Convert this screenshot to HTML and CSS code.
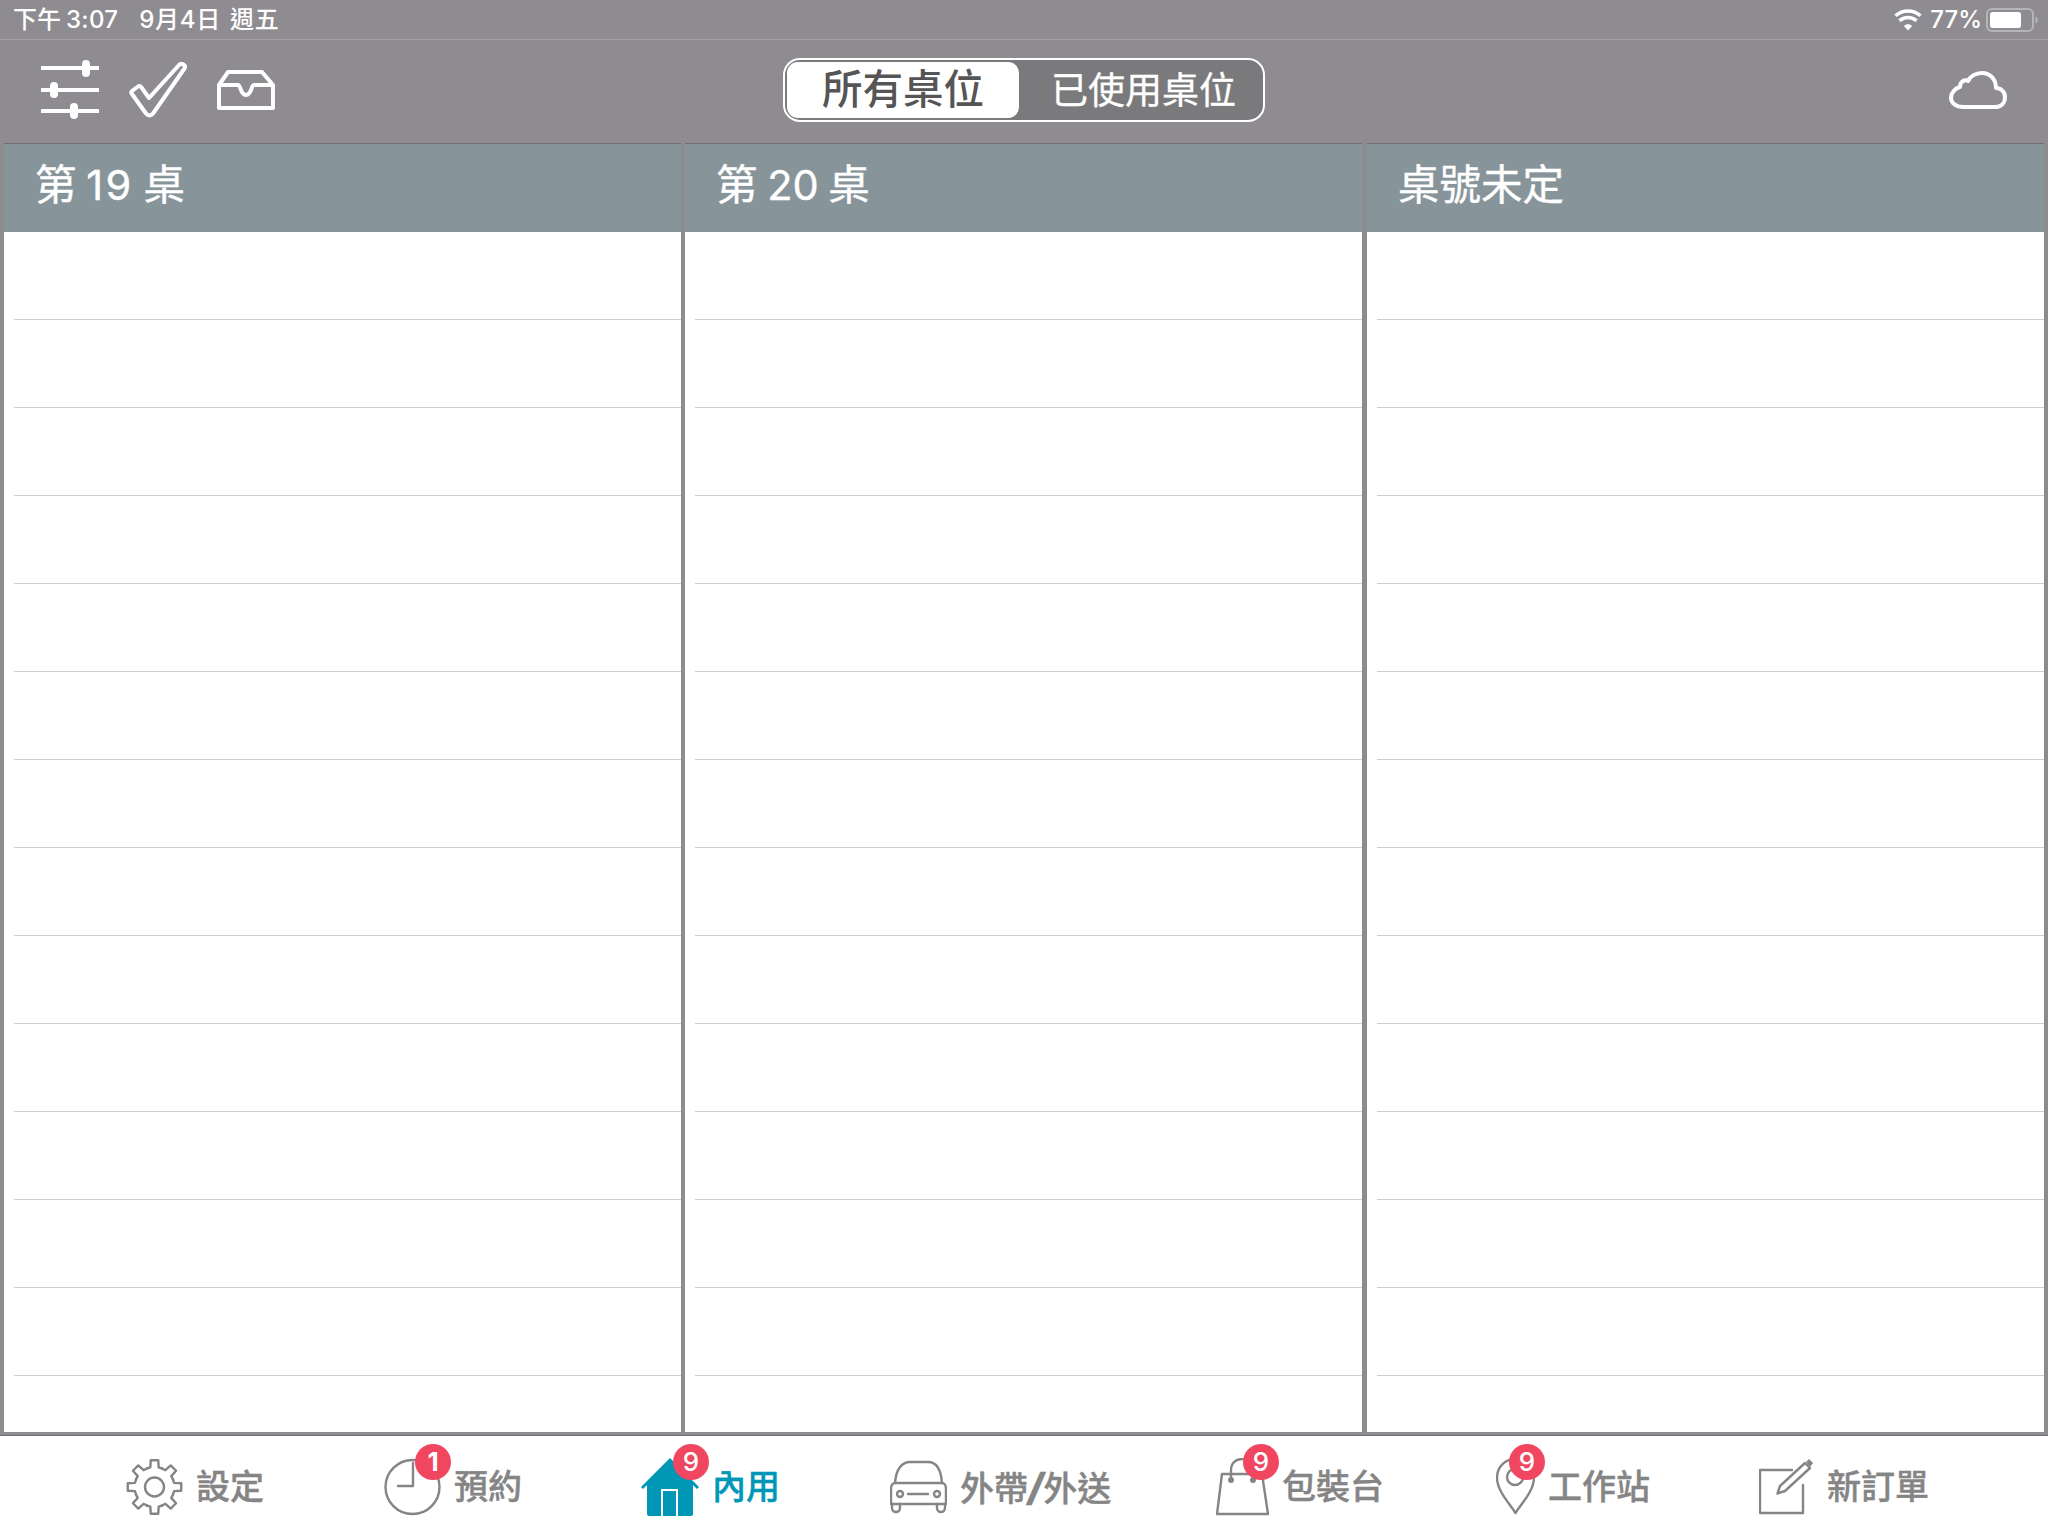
FILE: index.html
```html
<!DOCTYPE html>
<html lang="zh-Hant">
<head>
<meta charset="utf-8">
<title>內用</title>
<link rel="stylesheet" href="styles.css">
</head>
<body>
<div class="app">
  <header class="status">
    <div class="status-left"><span class="clock-text">下午<span class="clock-digits">3:07</span></span><span class="date-text">9月4日 週五</span></div>
    <div class="status-right">
      <svg class="wifi" viewBox="0 0 28 22"><path class="wifi-fill" d="M14 21.500 L9.800 17 C12.200 14.800 15.800 14.800 18.200 17Z"/><path class="wifi-line" d="M5.500 11.800 C10.300 7.500 17.700 7.500 22.500 11.800"/><path class="wifi-line" d="M1.500 6.800 C8.800 .400 19.200 .400 26.500 6.800"/></svg>
      <span>77%</span>
      <svg class="battery" viewBox="0 0 52 24"><rect class="battery-shell" x="1" y="1" width="46" height="22" rx="5"/><rect class="battery-level" x="4" y="4" width="31" height="16" rx="2.500"/><path class="battery-nub" d="M49.500 8.500 C51 9 52 10.500 52 12 C52 13.500 51 15 49.500 15.500Z"/></svg>
    </div>
  </header>

  <div class="toolbar">
    <div class="tools">
      <svg class="tool-sliders" viewBox="0 0 58 60"><path class="line-white" d="M1 8H57M1 30H57M1 51H57"/><rect class="knob" x="41" y="0" width="8" height="17" rx="4"/><rect class="knob" x="9" y="22" width="8" height="16" rx="4"/><rect class="knob" x="29" y="43" width="8" height="16" rx="4"/></svg>
      <svg class="tool-check" viewBox="0 0 58 56"><path class="line-white" d="M3 29 L9 24.500 C10.500 23.500 11.500 24 12.500 25.500 L20 36 L50 3 C52.500 .500 57.500 3 55.500 6.500 L24 51.500 C22 54 19 54 17 51.500 L3 32 C2 31 2 30 3 29Z"/></svg>
      <svg class="tool-inbox" viewBox="0 0 58 40"><path class="line-white" d="M2 15 L11 2 H45 L56 15 V38 H2Z M2 15 H21 C24 15 23 25 29 25 C35 25 34 15 37 15 H56"/></svg>
    </div>
    <div class="segment">
      <span class="seg-on">所有桌位</span>
      <span class="seg-off">已使用桌位</span>
    </div>
    <svg class="tool-cloud" viewBox="0 0 58 38"><path class="line-white" d="M14 36 H46 C52 36 56 32 56 26 C56 21 52 17 47 17 C47 8 41 2 33 2 C26 2 21 6 19 10 C15 8 11 11 11 16 C6 17 2 22 2 27 C2 32 7 36 14 36Z"/></svg>
  </div>

  <main class="board">
    <section class="column">
      <h2 class="column-title"><span>第 <span class="num-wide">19</span> 桌</span></h2>
      <div class="rows">
        <div class="row"></div><div class="row"></div><div class="row"></div><div class="row"></div><div class="row"></div><div class="row"></div><div class="row"></div><div class="row"></div><div class="row"></div><div class="row"></div><div class="row"></div><div class="row"></div><div class="row"></div>
      </div>
    </section>
    <section class="column">
      <h2 class="column-title">第 20 桌</h2>
      <div class="rows">
        <div class="row"></div><div class="row"></div><div class="row"></div><div class="row"></div><div class="row"></div><div class="row"></div><div class="row"></div><div class="row"></div><div class="row"></div><div class="row"></div><div class="row"></div><div class="row"></div><div class="row"></div>
      </div>
    </section>
    <section class="column">
      <h2 class="column-title">桌號未定</h2>
      <div class="rows">
        <div class="row"></div><div class="row"></div><div class="row"></div><div class="row"></div><div class="row"></div><div class="row"></div><div class="row"></div><div class="row"></div><div class="row"></div><div class="row"></div><div class="row"></div><div class="row"></div><div class="row"></div>
      </div>
    </section>
  </main>

  <nav class="tabs">
    <a class="tab">
      <span class="tab-icon">
        <svg class="i-gear" viewBox="-28.500 -29 57 58">
          <defs><path id="tooth" d="M-7.650-18.480 L-4.160-19.560 L-3.760-26.740 H3.760 L4.160-19.560 L7.650-18.480"/></defs>
          <g class="stroke-gray">
            <use href="#tooth"/><use href="#tooth" transform="rotate(45)"/><use href="#tooth" transform="rotate(90)"/><use href="#tooth" transform="rotate(135)"/><use href="#tooth" transform="rotate(180)"/><use href="#tooth" transform="rotate(225)"/><use href="#tooth" transform="rotate(270)"/><use href="#tooth" transform="rotate(315)"/>
            <circle r="9.500"/>
          </g>
        </svg>
      </span>
      <span>設定</span>
    </a>
    <a class="tab">
      <span class="tab-icon">
        <svg class="i-clock" viewBox="0 0 57 58"><g class="stroke-gray"><circle cx="28.500" cy="29" r="27"/><path d="M29 5V28H14"/></g></svg>
        <b class="badge badge-clock">1</b>
      </span>
      <span>預約</span>
    </a>
    <a class="tab tab-active">
      <span class="tab-icon">
        <svg class="i-home" viewBox="0 0 58 58"><path class="home-fill" d="M0 29 L29 0 L58 29 L56 31 L52 27 V56 C52 57 51 58 50 58 H8 C7 58 6 57 6 56 V27 L2 31Z"/><rect class="home-door" x="21" y="32" width="15" height="27"/></svg>
        <b class="badge badge-home">9</b>
      </span>
      <span>內用</span>
    </a>
    <a class="tab">
      <span class="tab-icon">
        <svg class="i-car" viewBox="0 -3 57 58"><g class="stroke-gray"><path d="M5 22 C6 8 12 1 20 1 H38 C46 1 51 8 52 22"/><path d="M1 28 C1 24 3 22 5 22 H52 C54 22 56 24 56 28 V43 H1Z"/><path d="M2 43 V47 A4 4 0 0 0 10 47 V43 M47 43 V47 A4 4 0 0 0 55 47 V43"/><circle cx="10" cy="33" r="3"/><circle cx="47" cy="33" r="3"/><path d="M18 33H38"/></g></svg>
      </span>
      <span>外帶<i class="slash">/</i>外送</span>
    </a>
    <a class="tab">
      <span class="tab-icon">
        <svg class="i-bag" viewBox="0 0 53 58"><g class="stroke-gray"><path d="M6 16 H46 L52 56 H1Z"/><path d="M15 22 V12 C15 5 20 1 26 1 C32 1 37 5 37 12 V22"/></g><circle class="dot" cx="15" cy="22" r="3"/><circle class="dot" cx="37" cy="22" r="3"/></svg>
        <b class="badge badge-bag">9</b>
      </span>
      <span>包裝台</span>
    </a>
    <a class="tab">
      <span class="tab-icon">
        <svg class="i-pin" viewBox="0 0 39 58"><g class="stroke-gray"><path d="M19.500 55 C14 46 1 33 1 20 C1 9 9 1 19.500 1 C30 1 38 9 38 20 C38 33 25 46 19.500 55Z"/><circle cx="19" cy="19" r="8"/></g></svg>
        <b class="badge badge-pin">9</b>
      </span>
      <span>工作站</span>
    </a>
    <a class="tab">
      <span class="tab-icon">
        <svg class="i-new" viewBox="0 0 55 58"><g class="stroke-gray"><path d="M33 12 H1 V55 H44 V27"/><path d="M18.500 35.500 L21 28 L46 5 L51 10 L26 33Z"/></g><path class="pencil-end" d="M47 4 L50 1 L54 5 L51 9Z"/></svg>
      </span>
      <span>新訂單</span>
    </a>
  </nav>
</div>
</body>
</html>
```

FILE: styles.css
```css
* { box-sizing: border-box; }

html, body { margin: 0; padding: 0; }

body {
  font-family: Inter, "Noto Sans CJK TC", sans-serif;
  background: #fff;
}

.app {
  display: flex;
  flex-direction: column;
  width: 2048px;
  height: 1536px;
  overflow: hidden;
}

/* status bar */
.status {
  display: flex;
  justify-content: space-between;
  align-items: center;
  height: 40px;
  padding: 0 10px 0 13px;
  background: #8e8c91;
  border-bottom: 1px solid #a3a1a6;
  color: #fff;
  font-size: 24px;
  font-weight: 500;
  line-height: 1;
}

.status-left { display: flex; gap: 21px; }

.clock-digits { margin-left: 5px; letter-spacing: .3px; }

.date-text { word-spacing: 2px; letter-spacing: .7px; }

.status-right { display: flex; align-items: center; gap: 8px; }

.wifi { width: 28px; height: 22px; }
.wifi-fill { fill: #fff; }
.wifi-line { fill: none; stroke: #fff; stroke-width: 3.500; }

.battery { width: 52px; height: 24px; margin-left: -4px; }
.battery-shell { fill: none; stroke: #b5b4b8; stroke-width: 2; }
.battery-level { fill: #fff; }
.battery-nub { fill: #b5b4b8; }

/* toolbar */
.toolbar {
  position: relative;
  display: flex;
  justify-content: space-between;
  align-items: center;
  height: 103px;
  padding: 0 41px 3px;
  background: #8e8c91;
}

.tools { display: flex; align-items: center; gap: 30px; }

.line-white {
  fill: none;
  stroke: #fff;
  stroke-width: 4;
  stroke-linecap: round;
  stroke-linejoin: round;
}

.knob { fill: #fff; }

.tool-sliders { width: 58px; height: 60px; }
.tool-check { width: 58px; height: 56px; }
.tool-inbox { width: 58px; height: 40px; }
.tool-cloud { width: 58px; height: 38px; }

.segment {
  position: absolute;
  left: 783px;
  top: 18px;
  display: flex;
  width: 482px;
  height: 64px;
  padding: 2px;
  background: #7a7a7c;
  border: 2px solid #fff;
  border-radius: 17px;
}

.seg-on {
  display: flex;
  justify-content: center;
  align-items: center;
  width: 232px;
  background: #fff;
  border-radius: 11px;
  color: #555;
  font-size: 40.500px;
  font-weight: 500;
  line-height: 1;
}

.seg-off {
  flex: 1;
  display: flex;
  justify-content: center;
  align-items: center;
  padding-left: 7px;
  color: #fff;
  font-size: 37px;
  line-height: 1;
  -webkit-text-stroke: .3px #fff;
}

/* columns */
.board {
  flex: 1;
  display: grid;
  grid-template-columns: 677px 677px 678px;
  grid-template-rows: minmax(0, 1fr);
  column-gap: 4px;
  padding: 0 4px 4px;
  background: #8e8c91;
  box-shadow: inset 0 -1px 0 #6f6f72;
}

.column {
  display: flex;
  flex-direction: column;
  background: #fff;
  overflow: hidden;
}

.column:last-child { margin-left: 1px; }

.column-title {
  display: flex;
  align-items: center;
  height: 89px;
  margin: 0;
  padding: 0 31px 5px;
  background: #87949a;
  border-top: 1px solid #6f6f72;
  color: #fff;
  font-size: 41.500px;
  font-weight: 400;
  word-spacing: -2px;
  line-height: 1;
  -webkit-text-stroke: .4px #fff;
}

.num-wide { letter-spacing: 2.500px; }

.rows { flex: 1; }

.row {
  height: 88px;
  margin-left: 10px;
  border-bottom: 1px solid #cfcfcf;
}

/* tab bar */
.tabs {
  display: grid;
  grid-template-columns: 258px 257px 249px 326px 280px 263px 1fr;
  align-items: center;
  height: 100px;
  padding: 2px 0 0 126px;
  background: #fff;
  color: #858585;
  font-size: 34px;
  font-weight: 500;
  line-height: 1;
  -webkit-text-stroke: .4px;
}

.tab { display: flex; align-items: center; gap: 13px; }

.tab-active { color: #0097b7; }

.tab-icon { position: relative; display: block; height: 58px; }

.tab-icon svg { display: block; height: 58px; }

.stroke-gray {
  fill: none;
  stroke: #858585;
  stroke-width: 2.400;
  stroke-linejoin: round;
  stroke-linecap: round;
}

.i-gear, .i-clock, .i-car { width: 57px; }
.i-home { width: 58px; }
.i-bag { width: 53px; }
.i-pin { width: 39px; }
.i-new { width: 55px; }

.home-fill { fill: #0097b7; }
.home-door { fill: none; stroke: #fff; stroke-width: 2; }
.dot, .pencil-end { fill: #858585; }

.slash {
  font-family: Inter, sans-serif;
  font-size: 38px;
  font-weight: 800;
}

.badge {
  position: absolute;
  top: -14px;
  display: flex;
  justify-content: center;
  align-items: center;
  width: 36px;
  height: 36px;
  background: #f04660;
  border-radius: 50%;
  color: #fff;
  font-size: 26px;
  font-weight: 500;
  line-height: 1;
  -webkit-text-stroke: 0;
}

.badge-clock { left: 31px; font-weight: 700; }
.badge-home { left: 32px; }
.badge-bag { left: 27px; }
.badge-pin { left: 13px; }
```
